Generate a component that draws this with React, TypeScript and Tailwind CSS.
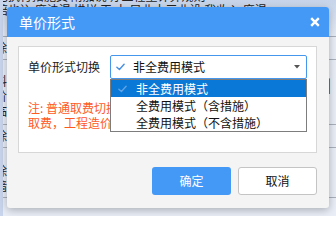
import React from 'react';

const cjk = { fontFamily: '"Microsoft YaHei", "Noto Sans CJK SC", sans-serif' };

function CheckMark({ className = '' }: { className?: string }) {
  return (
    <svg viewBox="0 0 10 8" className={className} fill="none">
      <path d="M1 4.2 L3.8 6.8 L9 1" stroke="currentColor" strokeWidth="1.6" strokeLinecap="round" strokeLinejoin="round" />
    </svg>
  );
}

function BackgroundTable() {
  return (
    <div className="absolute inset-0 bg-[#e9eef7] text-[12px] leading-[14px] text-[#222]">
      <div className="h-[37px] border-b border-[#a9b0bc] bg-gradient-to-b from-[#c7d4ea] to-[#e7edf7] overflow-hidden">
        <div className="-mt-[11px] -ml-[4px] whitespace-nowrap">
          <div>已执行措施费    附加说明    工程量计算规则</div>
          <div>陪也込  度法渴 措拼 工  十  早业十三业设   我收入  度渴</div>
        </div>
      </div>
      <div className="h-[23px] border-b border-[#a9b0bc] -ml-[5px] pt-[4px]">除</div>
      <div className="h-[65px] border-b border-[#a9b0bc] -ml-[5px] pt-[13px] leading-[15px] flex justify-between">
        <div>
          <div>料</div>
          <div>阶</div>
          <div>临</div>
        </div>
        <div className="pr-[5px] pt-[4px] text-[14px]">|</div>
      </div>
      <div className="h-[23px] border-b border-[#a9b0bc] -ml-[5px] pt-[4px]">除</div>
      <div className="h-[50px] border-b border-[#a9b0bc] -ml-[5px] pt-[15px] leading-[15px]">
        <div>除</div>
        <div>墙</div>
      </div>
      <div className="w-[3px] h-full absolute left-0 top-0 bg-[#c9d5ec]" />
    </div>
  );
}

export default function App() {
  return (
    <div className="relative w-[336px] h-[216px] overflow-hidden" style={cjk}>
      <BackgroundTable />

      <div className="absolute left-[7px] top-[7px] w-[322px] h-[201px] rounded-[3px] bg-[#f4f4f4] shadow-[0_2px_8px_rgba(0,0,0,0.28)] flex flex-col overflow-hidden">
        {/* title bar */}
        <div className="h-[30px] bg-[#4499f7] flex items-center justify-between pl-[12px] pr-[9px]">
          <span className="text-[14px] text-white">单价形式</span>
          <svg viewBox="0 0 10 10" className="w-[10px] h-[10px]" fill="none">
            <path d="M1.2 1.2 L8.8 8.8 M8.8 1.2 L1.2 8.8" stroke="white" strokeWidth="2.4" />
          </svg>
        </div>

        <div className="flex-1 pl-[11px] pr-[12px] pt-[9px]">
          <div className="h-[107px] bg-white border border-[#d7d7d7] pl-[9px] pr-[9px] pt-[8px]">
            <div className="flex items-center gap-[10px]">
              <span className="text-[12px] text-[#222] w-[72px] whitespace-nowrap">单价形式切换</span>
              <div className="relative w-[197px]">
                <div className="h-[24px] border border-[#4597ee] rounded-[2px] bg-white flex items-center pl-[5px] pr-[6px]">
                  <CheckMark className="w-[9px] h-[8px] text-[#4a90e2]" />
                  <span className="ml-[8px] text-[12px] text-[#111] flex-1">非全费用模式</span>
                  <svg viewBox="0 0 6 4" className="w-[6px] h-[4px]">
                    <path d="M0 0 H6 L3 3.5 Z" fill="#555" />
                  </svg>
                </div>
                <div className="absolute left-0 top-full w-full bg-white border border-[#7d7d7d] z-10 text-[12px]">
                  <div className="h-[17px] bg-[#0a78d7] flex items-center pl-[7px] text-white">
                    <CheckMark className="w-[9px] h-[8px] text-[#5ea3e6]" />
                    <span className="ml-[9px]">非全费用模式</span>
                  </div>
                  <div className="h-[17px] flex items-center pl-[25px] text-[#111]">全费用模式（含措施）</div>
                  <div className="h-[17px] flex items-center pl-[25px] text-[#111]">全费用模式（不含措施）</div>
                </div>
              </div>
            </div>
            <div className="mt-[21px] text-[12px] leading-[15px] text-[#ff5a1e] whitespace-nowrap">
              <div>注: 普通取费切换为全费用，或全费用切换为普通</div>
              <div>取费，工程造价将重新计算，请谨慎操作！</div>
            </div>
          </div>

          <div className="mt-[14px] flex justify-end gap-[7px]">
            <button className="w-[79px] h-[28px] rounded-[3px] bg-[#4499f7] text-white text-[12px]">确定</button>
            <button className="w-[79px] h-[28px] rounded-[3px] bg-white border border-[#c4c4c4] text-[#111] text-[12px]">取消</button>
          </div>
        </div>
      </div>
    </div>
  );
}
